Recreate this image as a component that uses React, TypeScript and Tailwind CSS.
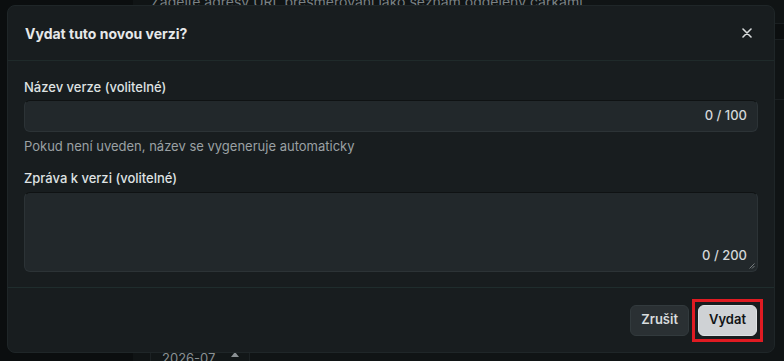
import React from "react";

export default function App() {
  return (
    <div
      className="relative w-[784px] h-[361px] overflow-hidden bg-[#0f1314]"
      style={{ fontFamily: "Inter, 'Noto Sans', sans-serif" }}
    >
      {/* background page (dimmed) */}
      <div className="absolute inset-0 flex">
        <div className="w-[133px] h-full bg-[#0b0e0f]" />
        <div className="flex-1 h-full bg-[#101415] relative">
          <div className="absolute left-[18px] top-[-9px] text-[14px] text-[#7b8285] whitespace-nowrap">
            Zadejte adresy URL přesměrování jako seznam oddělený čárkami
          </div>
          <div className="absolute left-[17px] top-[353px] w-[100px] h-[8px] border-l border-r border-[#1c2224] bg-[#121718]">
            <span className="absolute left-[11px] top-[-4px] text-[13px] text-[#8a9093]">2026-07</span>
            <span className="absolute left-[80px] top-[-1px] w-0 h-0 border-l-[4px] border-r-[4px] border-b-[5px] border-l-transparent border-r-transparent border-b-[#8a9093]" />
          </div>
        </div>
      </div>
      <div className="absolute right-0 top-0 w-[9px] h-full">
        <div className="h-[24px] border-b border-[#1a1f21]" />
        <div className="h-[16px] border-b border-[#1a1f21] bg-[#0c0f10]" />
        <div className="h-[60px] border-b border-[#1a1f21]" />
      </div>

      {/* modal */}
      <div className="absolute left-[7px] top-[5px] w-[768px] h-[348px] rounded-[8px] bg-[#181d1f] border border-[#1f2628] flex flex-col">
        <div className="h-[55px] flex items-center justify-between pl-[17px] pr-[22px] border-b border-[#1f2a2a]">
          <h2 className="text-[14px] font-bold text-[#e6e8e9]">Vydat tuto novou verzi?</h2>
          <svg width="10" height="10" viewBox="0 0 10 10" className="text-[#d8dbdc]">
            <path d="M1 1L9 9M9 1L1 9" stroke="currentColor" strokeWidth="1.6" strokeLinecap="round" />
          </svg>
        </div>
        <div className="flex-1 px-[16px] pt-[17px] flex flex-col border-b border-[#1f2d2d]">
          <label className="text-[13px] font-medium text-[#dfe2e3] leading-[18px]">Název verze (volitelné)</label>
          <div className="mt-[4px] h-[32px] rounded-[6px] bg-[#22282b] border border-[#2c3336] border-t-[#0f1213] flex items-center justify-end pr-[10px]">
            <span className="text-[13px] font-medium text-[#d4d7d9]">0 / 100</span>
          </div>
          <p className="mt-[5px] text-[13px] text-[#9ba1a4] leading-[18px]">Pokud není uveden, název se vygeneruje automaticky</p>
          <label className="mt-[14px] text-[13px] font-medium text-[#dfe2e3] leading-[18px]">Zpráva k verzi (volitelné)</label>
          <div className="relative mt-[5px] h-[80px] rounded-[6px] bg-[#22282b] border border-[#2c3336] border-t-[#0f1213] flex items-end justify-end pr-[10px] pb-[6px]">
            <span className="text-[13px] font-medium text-[#d4d7d9]">0 / 200</span>
            <svg width="6" height="6" viewBox="0 0 6 6" className="absolute right-[2px] bottom-[2px]">
              <path d="M5.5 0.5L0.5 5.5M5.5 3L3 5.5" stroke="#8a9093" strokeWidth="0.8" />
            </svg>
          </div>
        </div>
        <div className="h-[64px] flex items-center justify-end pr-[17px]">
          <button className="h-[31px] px-[10px] rounded-[6px] bg-[#2a3033] border border-[#323a3d] text-[13px] font-semibold text-[#d8dcde]">
            Zrušit
          </button>
          <div className="ml-[3px] -my-[6px] -mr-[6px] p-[3px] border-[3px] border-[#e01b22]">
            <button className="h-[31px] w-[59px] rounded-[6px] bg-[#cfd2d5] border border-[#e0e3e5] text-[13px] font-semibold text-[#111416]">
              Vydat
            </button>
          </div>
        </div>
      </div>
    </div>
  );
}
